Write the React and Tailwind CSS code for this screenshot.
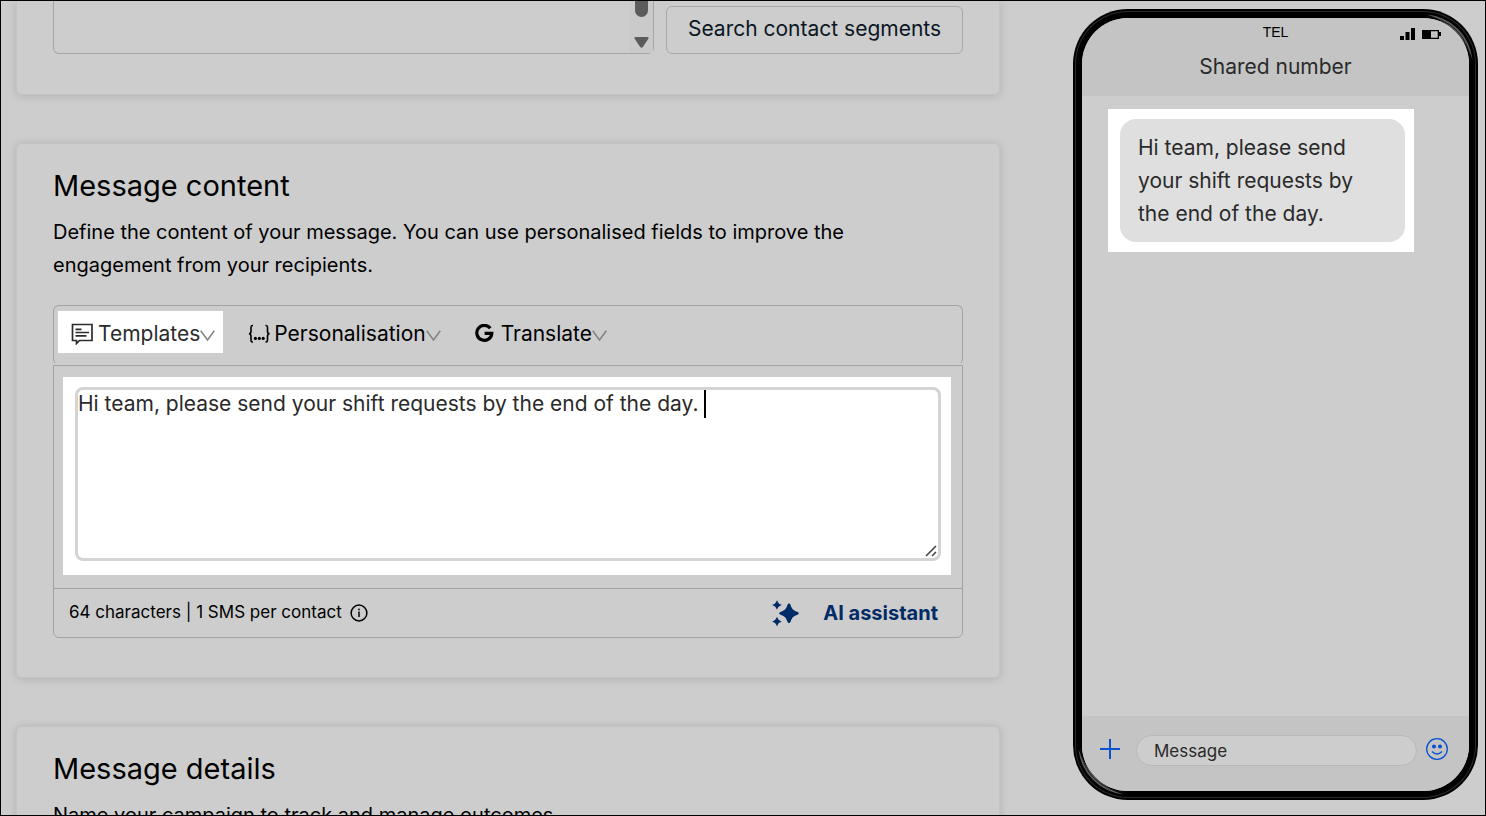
import { useState } from 'react';

const DEFAULT_MESSAGE = 'Hi team, please send your shift requests by the end of the day. ';

const Chevron = () => (
  <svg width="15" height="11" viewBox="0 0 15 11" fill="none" stroke="currentColor" strokeWidth="1.6" className="mt-1 text-[#858585]">
    <path d="M0.7 0.8 L7.5 10 L14.3 0.8" />
  </svg>
);

const TemplateIcon = () => (
  <svg width="22" height="22" viewBox="0 0 22 22" fill="none" stroke="currentColor" strokeWidth="1.7">
    <path d="M1.5 1.5 H21 V17.5 H8.5 L5.5 20.5 V17.5 H1.5 Z" />
    <path d="M4.5 6.3 H10.5 M4.5 9.5 H18 M4.5 12.8 H15.5" />
  </svg>
);

const BracesIcon = () => (
  <svg width="22" height="20" viewBox="0 0 22 20" fill="none" stroke="currentColor" strokeWidth="1.6">
    <path d="M5 1.5 H4.5 Q3 1.5 3 3.2 V7.5 Q3 9.6 1 9.8 Q3 10 3 12.3 V16.3 Q3 18 4.5 18 H5" />
    <path d="M17.5 1.5 H18 Q19.5 1.5 19.5 3.2 V7.5 Q19.5 9.6 21.5 9.8 Q19.5 10 19.5 12.3 V16.3 Q19.5 18 18 18 H17.5" />
    <g fill="currentColor" stroke="none">
      <circle cx="7.4" cy="14.4" r="1.6" />
      <circle cx="11.3" cy="14.4" r="1.6" />
      <circle cx="15.2" cy="14.4" r="1.6" />
    </g>
  </svg>
);

const GoogleIcon = () => (
  <svg width="19" height="19" viewBox="0 0 19 19" fill="none" stroke="currentColor" strokeWidth="3.2">
    <path d="M15.3 4.3 A7.5 7.5 0 1 0 16.8 9.3 H9.6" />
  </svg>
);

const SparklesIcon = () => (
  <svg width="27" height="27" viewBox="0 0 27 27" fill="currentColor">
    <path d="M17 3.5 C17.8 3.5 18.2 4 18.6 5 C20 9 21 10.3 25 11.7 C26 12.1 26.8 12.5 26.8 13.3 C26.8 14.1 26 14.5 25 14.9 C21 16.3 20 17.6 18.6 21.6 C18.2 22.6 17.8 23.1 17 23.1 C16.2 23.1 15.8 22.6 15.4 21.6 C14 17.6 13 16.3 9 14.9 C8 14.5 7.2 14.1 7.2 13.3 C7.2 12.5 8 12.1 9 11.7 C13 10.3 14 9 15.4 5 C15.8 4 16.2 3.5 17 3.5 Z" />
    <path d="M5 0.2 C6.4 3.2 6.8 3.6 9.8 5 C6.8 6.4 6.4 6.8 5 9.8 C3.6 6.8 3.2 6.4 0.2 5 C3.2 3.6 3.6 3.2 5 0.2 Z" />
    <path d="M5 16.8 C6.4 19.8 6.8 20.2 9.8 21.6 C6.8 23 6.4 23.4 5 26.4 C3.6 23.4 3.2 23 0.2 21.6 C3.2 20.2 3.6 19.8 5 16.8 Z" />
  </svg>
);

const InfoIcon = () => (
  <svg width="18" height="18" viewBox="0 0 18 18" fill="none" stroke="currentColor" strokeWidth="1.5">
    <circle cx="9" cy="9" r="7.9" />
    <path d="M9 7.5 V13" />
    <circle cx="9" cy="5.4" r="0.9" fill="currentColor" stroke="none" />
  </svg>
);

// light reflection on the rounded corner of the phone frame
const CornerShine = ({ className }) => (
  <svg width="55" height="55" viewBox="0 0 55 55" className={`absolute ${className}`}>
    <path d="M4 5.5 A50 50 0 0 1 49.5 51 A69 69 0 0 0 4 5.5 Z" fill="#5a5a5a" />
    <path d="M3 7.5 A48 48 0 0 1 47.5 52" fill="none" stroke="#111111" strokeWidth="0.8" />
  </svg>
);

const Card = ({ className = '', children }) => (
  <section className={`border border-[#c3c3c3] px-9 shadow-[0_1px_10px_rgba(0,0,0,0.14)] ${className}`}>
    {children}
  </section>
);

const PhonePreview = ({ message }) => (
  <aside className="relative mt-2 h-[791px] w-[405px] shrink-0 p-[9px]">
    <div className="flex h-full flex-col overflow-hidden rounded-[46px] bg-[#cdcdcd] text-[#2a2a2a] shadow-[0_0_0_6px_#000,0_0_0_7px_#2c2c2c,0_0_0_9px_#000]">
      <header className="relative h-[78px] bg-[#c4c4c4] pt-1 text-center">
        <p className="font-['Liberation_Sans',sans-serif] text-sm leading-5 text-black">TEL</p>
        <svg width="42" height="13" viewBox="0 0 42 13" className="absolute top-[9px] right-[27px] text-black" fill="currentColor">
          <path d="M0 9 H4 V13 H0 Z M5.5 5 H9.5 V13 H5.5 Z M11 1 H15 V13 H11 Z" />
          <path fillRule="evenodd" d="M22 3 H39 V5 H41 V9 H39 V12 H22 Z M31 4.3 V10.7 H37.7 V4.3 Z" />
        </svg>
        <h2 className="mt-[11px] text-[21px] leading-7">Shared number</h2>
      </header>
      <div className="flex-1 pt-[13px] pl-[26px]">
        <div className="w-[306px] bg-white py-[10px] pr-[9px] pl-3">
          <p className="rounded-2xl bg-[#dfdfdf] py-3 pr-[30px] pl-[18px] text-[21px] leading-[33px]">{message}</p>
        </div>
      </div>
      <footer className="flex h-[75px] items-start bg-[#c4c4c4] pt-[19px] pr-[21px] pl-[18px]">
        <button type="button" aria-label="Add" className="mt-1 text-[#0a50d0]">
          <svg width="20" height="20" viewBox="0 0 20 20" stroke="currentColor" strokeWidth="2">
            <path d="M0 10 H20 M10 0 V20" />
          </svg>
        </button>
        <input
          type="text"
          aria-label="Message"
          placeholder="Message"
          className="ml-4 h-[31px] min-w-0 flex-1 rounded-full border border-[#b8b8b8] bg-[#cdcdcd] px-[17px] text-[17px] placeholder:text-[#2a2a2a]"
        />
        <button type="button" aria-label="Emoji" className="mt-[3px] ml-[9px] text-[#0a50d0]">
          <svg width="22" height="22" viewBox="0 0 22 22" fill="none" stroke="currentColor" strokeWidth="1.3">
            <circle cx="11" cy="11" r="10.3" />
            <circle cx="8" cy="8.5" r="2" fill="currentColor" stroke="none" />
            <circle cx="14" cy="8.5" r="2" fill="currentColor" stroke="none" />
            <path d="M6 13.5 Q11 18.5 16 13.5" />
          </svg>
        </button>
      </footer>
    </div>
    <CornerShine className="top-0 right-0" />
    <CornerShine className="bottom-0 left-0 rotate-180" />
  </aside>
);

const App = () => {
  const [message, setMessage] = useState(DEFAULT_MESSAGE);

  return (
    <div className="flex h-screen overflow-hidden border border-black bg-[#cdcdcd] pr-[7px] pl-[15px] font-[Inter,sans-serif] text-black">
      <main className="mr-[73px] min-w-0 flex-1">
        <Card className="flex rounded-b-md border-t-0 pb-10">
          <div className="flex h-[53px] flex-1 justify-end rounded-b-md border border-t-0 border-[#a6a6a6]">
            <div className="flex w-6 flex-col items-center justify-between bg-[#cacaca] pb-[5px]">
              <div className="h-4 w-[13px] rounded-b-full bg-[#5b5b5b]" />
              <svg width="15" height="11" viewBox="0 0 15 11" fill="#5b5b5b">
                <path d="M1.5 0 H13.5 Q15.3 0.3 14.2 2 L8.8 10 Q7.5 11.5 6.2 10 L0.8 2 Q-0.3 0.3 1.5 0 Z" />
              </svg>
            </div>
          </div>
          <button type="button" className="mt-[5px] ml-3 h-12 w-[297px] rounded-md border border-[#a9a9a9] pb-[2px] text-[21px] text-[#0b1623]">
            Search contact segments
          </button>
        </Card>

        <Card className="mt-12 rounded-md pt-6 pb-[39px]">
          <h1 className="text-[29px] leading-9">Message content</h1>
          <p className="mt-3 text-xl leading-[33px]">
            Define the content of your message. You can use personalised fields to improve the engagement from your recipients.
          </p>

          <div className="mt-[23px] flex h-[60px] items-start rounded-md border border-[#a3a3a3] border-b-transparent pt-[5px] pl-1 text-[21px]">
            <button type="button" className="flex h-[42px] items-center bg-white pt-[3px] pr-[8px] pl-[13px] text-[#2c2c2c]">
              <TemplateIcon />
              <span className="ml-[5px]">Templates</span>
              <Chevron />
            </button>
            <button type="button" className="ml-[25px] flex h-[42px] items-center pt-[3px]">
              <BracesIcon />
              <span className="ml-1">Personalisation</span>
              <Chevron />
            </button>
            <button type="button" className="ml-[34px] flex h-[42px] items-center pt-[3px]">
              <GoogleIcon />
              <span className="ml-[7px]">Translate</span>
              <Chevron />
            </button>
          </div>

          <div className="rounded-b-md border border-[#a3a3a3]">
            <div className="pt-[11px] pr-[11px] pb-[13px] pl-[9px]">
              <div className="relative bg-white pt-[10px] pr-[10px] pb-[14px] pl-3">
                <textarea
                  aria-label="Message content"
                  value={message}
                  onChange={(e) => setMessage(e.target.value)}
                  className="block h-[174px] w-full resize-none rounded-lg border-[3px] border-[#d3d4d6] text-[21px] leading-7 text-[#2a2a2a] outline-none"
                />
                <span className="absolute top-[13px] left-[641px] h-7 w-[2px] bg-black" />
                <svg width="12" height="12" viewBox="0 0 12 12" className="pointer-events-none absolute right-[14px] bottom-[18px]" stroke="#444444" strokeWidth="1.6">
                  <path d="M1 11 L11 1 M7 11 L11 7" />
                </svg>
              </div>
            </div>
            <div className="flex h-[49px] items-center justify-between border-t border-[#a3a3a3] pr-6 pl-[15px]">
              <p className="flex items-center gap-2 text-[17px]">
                64 characters | 1 SMS per contact
                <InfoIcon />
              </p>
              <button type="button" className="flex items-center gap-6 text-xl font-bold text-[#002b66]">
                <SparklesIcon />
                AI assistant
              </button>
            </div>
          </div>
        </Card>

        <Card className="mt-12 rounded-md pt-6 pb-10">
          <h1 className="text-[29px] leading-9">Message details</h1>
          <p className="mt-3 text-xl leading-[33px]">Name your campaign to track and manage outcomes.</p>
        </Card>
      </main>

      <PhonePreview message={message} />
    </div>
  );
};

export default App;
